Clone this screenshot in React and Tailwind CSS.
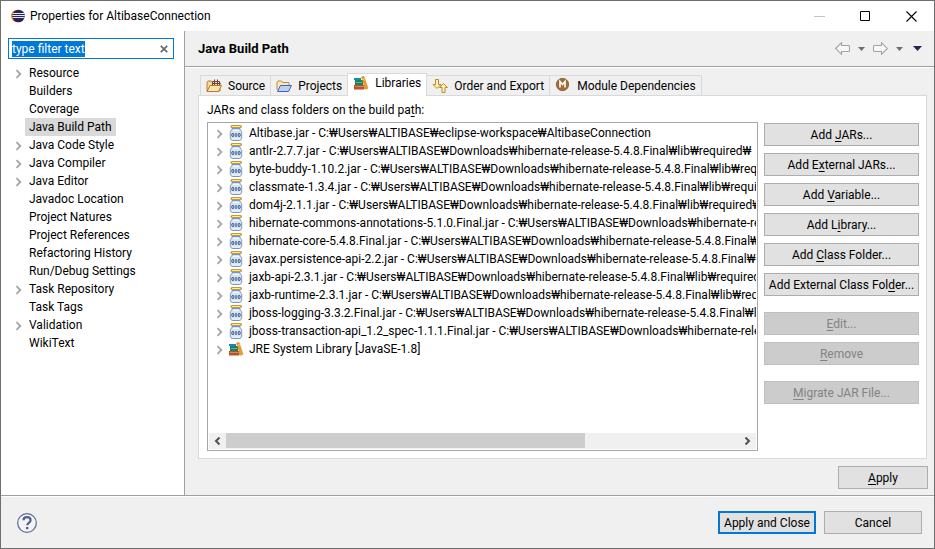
import { useEffect, useRef } from "react";

const LIB = "C:₩Users₩ALTIBASE₩Downloads₩hibernate-release-5.4.8.Final₩lib₩required₩";

const PAGES = [
  ["Resource", true],
  ["Builders", false],
  ["Coverage", false],
  ["Java Build Path", false],
  ["Java Code Style", true],
  ["Java Compiler", true],
  ["Java Editor", true],
  ["Javadoc Location", false],
  ["Project Natures", false],
  ["Project References", false],
  ["Refactoring History", false],
  ["Run/Debug Settings", false],
  ["Task Repository", true],
  ["Task Tags", false],
  ["Validation", true],
  ["WikiText", false],
];

const JARS = [
  "Altibase.jar - C:₩Users₩ALTIBASE₩eclipse-workspace₩AltibaseConnection",
  "antlr-2.7.7.jar - " + LIB,
  "byte-buddy-1.10.2.jar - " + LIB,
  "classmate-1.3.4.jar - " + LIB,
  "dom4j-2.1.1.jar - " + LIB,
  "hibernate-commons-annotations-5.1.0.Final.jar - " + LIB,
  "hibernate-core-5.4.8.Final.jar - " + LIB,
  "javax.persistence-api-2.2.jar - " + LIB,
  "jaxb-api-2.3.1.jar - " + LIB,
  "jaxb-runtime-2.3.1.jar - " + LIB,
  "jboss-logging-3.3.2.Final.jar - " + LIB,
  "jboss-transaction-api_1.2_spec-1.1.1.Final.jar - " + LIB,
];

function EclipseIcon() {
  return (
    <svg className="size-4 shrink-0" viewBox="0 0 16 16" aria-hidden="true">
      <circle cx="7.200" cy="8" r="6.200" fill="#f7941e" />
      <circle cx="8.500" cy="8" r="6.300" fill="#2c2255" />
      <path d="M2.600 5.500h12M2.200 7.500h12.600M2.600 9.500h12" stroke="#e8e6f2" strokeWidth="1" />
    </svg>
  );
}

function Chevron({ visible = true }) {
  return (
    <svg className="h-[18px] w-2 shrink-0" viewBox="0 0 8 18" aria-hidden="true">
      {visible && <path d="M1.500 6.200 5.300 10 1.500 13.800" fill="none" stroke="#a6a6a6" strokeWidth="1.800" />}
    </svg>
  );
}

function JarIcon() {
  return (
    <svg className="size-4 shrink-0" viewBox="0 0 16 16" aria-hidden="true">
      <path d="M4 3.500h8v1.500c1.200.6 1.700 1.400 1.700 2.500v5c0 1.700-.9 3-2.600 3H4.900c-1.700 0-2.600-1.300-2.600-3v-5c0-1.100.5-1.900 1.700-2.500z" fill="#d5e3f3" stroke="#7896c0" />
      <path d="M5 5.500h6M4 14h8" stroke="#f4f9ff" />
      <path d="M4 1.500h8.500" stroke="#c79a2e" strokeWidth="3" strokeLinecap="round" />
      <path d="M4.500 1.500h7.500" stroke="#f9e9ae" strokeLinecap="round" />
      <rect x="3.900" y="8.500" width="1.900" height="3" rx=".8" fill="none" stroke="#1f3a6b" strokeWidth=".9" />
      <path d="M8 8v4" stroke="#1f3a6b" />
      <rect x="10.200" y="8.500" width="1.900" height="3" rx=".8" fill="none" stroke="#1f3a6b" strokeWidth=".9" />
    </svg>
  );
}

function BooksIcon() {
  return (
    <svg className="size-4 shrink-0" viewBox="0 0 16 16" aria-hidden="true">
      <path d="M1 3h7v2H1z" fill="#1b87b5" />
      <path d="M2 5h8v5.500H2z" fill="#178264" />
      <path d="M3 7.500h6" stroke="#5fb592" />
      <path d="M1 10h10.500v4.500H1z" fill="#b5522a" />
      <path d="M2 11.500h9" stroke="#d98a52" />
      <path d="M8.500 2 11 1.300 15 13.300 12.500 14.300z" fill="#e9a02c" stroke="#d08a20" strokeWidth=".6" />
      <path d="M9.300 4.500l2.400-.8" stroke="#fbe0a0" strokeWidth=".8" />
    </svg>
  );
}

function SourceIcon() {
  return (
    <svg className="size-4 shrink-0" viewBox="0 0 16 16" aria-hidden="true">
      <path d="M1 13V4.500L2 3h3.500l1 1.500H14V13z" fill="#f6d999" stroke="#b87a2b" />
      <path d="M6.500 3.500h7v4h-7zM6.500 5.500h8M8.500 1.500v6M11.500 1.500v6" fill="#f1dfce" stroke="#6f4034" />
      <path d="M1 13.500 4 7.500h11.500L12.500 13.500z" fill="#fbe3ae" stroke="#b87a2b" />
    </svg>
  );
}

function ProjectsIcon() {
  return (
    <svg className="size-4 shrink-0" viewBox="0 0 16 16" aria-hidden="true">
      <path d="M1 12V4.500L2 3h3.500l1 1.500H13V8" fill="#fbe7b5" stroke="#c08a3a" />
      <path d="M1.500 13.500 4.500 7.500h11l-3 6z" fill="#b9d2f5" stroke="#3f63b4" />
    </svg>
  );
}

function OrderIcon() {
  return (
    <svg className="size-4 shrink-0" viewBox="0 0 16 16" aria-hidden="true">
      <path d="M3.500 1.500h3v5H9L5 10.500 1 6.500h2.500z" fill="#fdf0bb" stroke="#c08a22" />
      <path d="M10 14.500h3v-5h2.500l-4-4-4 4H10z" fill="#fdf0bb" stroke="#c08a22" />
    </svg>
  );
}

function ModuleIcon() {
  return (
    <svg className="size-4 shrink-0" viewBox="0 0 16 16" aria-hidden="true">
      <circle cx="7.500" cy="6.500" r="6.200" fill="#a26a35" stroke="#7d5026" strokeWidth=".7" />
      <path d="M5 9.500v-6l2.500 3 2.500-3v6" fill="none" stroke="#fff" strokeWidth="1.600" />
    </svg>
  );
}

function NavArrow({ flip }) {
  return (
    <svg className={flip ? "h-[13px] w-[15px] rotate-180" : "h-[13px] w-[15px]"} viewBox="0 0 15 13" aria-hidden="true">
      <path d="M.7 6.500 6.500.7v2.800h7q1 0 1 1v4q0 1-1 1h-7v2.800z" fill="#f8f8f8" stroke="#a3a3a3" strokeWidth="1.100" />
    </svg>
  );
}

function Triangle({ dark }) {
  return dark ? (
    <svg className="h-[5px] w-[9px]" viewBox="0 0 9 5" aria-hidden="true">
      <path d="M0 0h9L4.500 5z" fill="#2f1f55" />
    </svg>
  ) : (
    <svg className="h-1 w-[7px]" viewBox="0 0 7 4" aria-hidden="true">
      <path d="M0 0h7L3.500 4z" fill="#6f6f6f" />
    </svg>
  );
}

function ScrollArrow({ flip }) {
  return (
    <button type="button" aria-label={flip ? "Scroll right" : "Scroll left"} className="flex w-[17px] shrink-0 items-center justify-center">
      <svg className={flip ? "h-2 w-[7px] rotate-180" : "h-2 w-[7px]"} viewBox="0 0 7 8" aria-hidden="true">
        <path d="M5.500.5 2 4l3.500 3.500" fill="none" stroke="#505050" strokeWidth="2" />
      </svg>
    </button>
  );
}

/* The letter after "&" in a label is its keyboard mnemonic. */
function Mnemonic({ text }) {
  const at = text.indexOf("&");
  if (at < 0) return text;
  return (
    <span>
      {text.slice(0, at)}
      <u className="underline-offset-2">{text[at + 1]}</u>
      {text.slice(at + 2)}
    </span>
  );
}

function PushButton({ label, className = "", disabled = false }) {
  return (
    <button
      type="button"
      disabled={disabled}
      className={
        "h-[23px] shrink-0 border border-[#adadad] bg-[#e1e1e1] text-center leading-5 whitespace-nowrap disabled:border-[#bfbfbf] disabled:bg-[#cccccc] disabled:text-[#838383] " +
        className
      }
    >
      <Mnemonic text={label} />
    </button>
  );
}

function Tab({ icon, label, selected = false }) {
  return (
    <button
      type="button"
      role="tab"
      aria-selected={selected}
      className={
        selected
          ? "-mb-px flex h-[23px] items-center gap-1.5 border border-b-0 border-[#d9d9d9] bg-white px-[5px] pb-1"
          : "flex h-5 items-center gap-1.5 border-t border-l border-[#d9d9d9] bg-[#f0f0f0] px-[5px] last:border-r [[aria-selected=true]+&]:border-l-0"
      }
    >
      {icon}
      {label}
    </button>
  );
}

function LibraryRow({ icon, text }) {
  return (
    <li className="flex h-[18px] items-center pl-[7px]">
      <Chevron />
      <span className="ml-1 flex">{icon}</span>
      <span className="ml-[5px] whitespace-nowrap">{text}</span>
    </li>
  );
}

export default function App() {
  const filter = useRef(null);
  useEffect(() => {
    filter.current.focus();
    filter.current.select();
  }, []);

  return (
    <div className="flex h-screen flex-col border border-[#6e6e6e] bg-[#f0f0f0] font-[Roboto,'Noto_Sans_CJK_KR',sans-serif] text-[12px] leading-[18px] text-black">
      <header className="flex h-[30px] shrink-0 items-center bg-white pl-[9px]">
        <EclipseIcon />
        <h1 className="ml-1 grow">Properties for AltibaseConnection</h1>
        <button type="button" aria-label="Minimize" className="flex h-full w-[46px] items-center justify-center">
          <svg className="size-[11px]" viewBox="0 0 11 11" aria-hidden="true"><path d="M0 5.500h11" stroke="#c4c4c4" /></svg>
        </button>
        <button type="button" aria-label="Maximize" className="flex h-full w-[46px] items-center justify-center">
          <svg className="size-[11px]" viewBox="0 0 11 11" aria-hidden="true"><path d="M.5.5h9v9h-9z" fill="none" stroke="#000" /></svg>
        </button>
        <button type="button" aria-label="Close" className="flex h-full w-[46px] items-center justify-center">
          <svg className="size-[11px]" viewBox="0 0 11 11" aria-hidden="true"><path d="M.5.5l10 10M10.500.5l-10 10" stroke="#000" strokeWidth="1.100" /></svg>
        </button>
      </header>

      <div className="flex min-h-0 grow">
        <nav className="w-[184px] shrink-0 border-r border-[#a0a0a0] bg-white pt-[7px] pr-2.5 pl-[7px]">
          <div className="flex h-[21px] items-center border border-[#0078d7] pr-[5px] pl-[3px]">
            <input
              ref={filter}
              type="text"
              aria-label="Filter"
              defaultValue="type filter text"
              className="h-4 min-w-0 grow outline-none selection:bg-[#0078d7] selection:text-white"
            />
            <button type="button" aria-label="Clear filter">
              <svg className="size-2" viewBox="0 0 8 8" aria-hidden="true"><path d="M.8.8l6.400 6.400M7.200.8.8 7.200" stroke="#6b6b6b" strokeWidth="1.800" /></svg>
            </button>
          </div>
          <ul className="mt-[5px] pl-[7px]">
            {PAGES.map(([name, expandable]) => (
              <li key={name} className="flex h-[18px] items-center">
                <Chevron visible={expandable} />
                <a href="#page" className={name === "Java Build Path" ? "ml-0.5 bg-[#d9d9d9] px-1" : "ml-0.5 px-1"}>
                  {name}
                </a>
              </li>
            ))}
          </ul>
        </nav>

        <main className="flex min-w-0 grow flex-col">
          <div className="flex h-9 shrink-0 items-center border-b border-[#a0a0a0] pr-3 pl-[13px]">
            <h2 className="grow text-[13px] font-bold">Java Build Path</h2>
            <div className="flex items-center gap-2">
              <button type="button" aria-label="Back"><NavArrow /></button>
              <button type="button" aria-label="Back history"><Triangle /></button>
              <button type="button" aria-label="Forward"><NavArrow flip /></button>
              <button type="button" aria-label="Forward history"><Triangle /></button>
              <button type="button" aria-label="View menu" className="ml-0.5"><Triangle dark /></button>
            </div>
          </div>

          <div className="flex min-h-0 grow flex-col border-t border-white pt-[5px] pb-1.5 pl-[13px]">
            <div role="tablist" className="z-10 flex h-[22px] shrink-0 items-end pl-0.5">
              <Tab icon={<SourceIcon />} label="Source" />
              <Tab icon={<ProjectsIcon />} label="Projects" />
              <Tab icon={<BooksIcon />} label="Libraries" selected />
              <Tab icon={<OrderIcon />} label="Order and Export" />
              <Tab icon={<ModuleIcon />} label="Module Dependencies" />
            </div>

            <section className="mr-[7px] flex min-h-0 grow flex-col border border-[#d9d9d9] bg-white pt-[5px] pr-[7px] pb-[7px] pl-2">
              <h3 id="jars">
                <Mnemonic text="JARs and class folders on the build pa&th:" />
              </h3>
              <div className="mt-[3px] flex min-h-0 grow gap-1.5">
                <div className="flex min-w-0 grow flex-col border border-[#a5a7af] p-px">
                  <ul aria-labelledby="jars" className="min-h-0 grow overflow-hidden">
                    {JARS.map((jar) => (
                      <LibraryRow key={jar} icon={<JarIcon />} text={jar} />
                    ))}
                    <LibraryRow icon={<BooksIcon />} text="JRE System Library [JavaSE-1.8]" />
                  </ul>
                  <div className="flex h-4 shrink-0 bg-[#f0f0f0]">
                    <ScrollArrow />
                    <div className="grow">
                      <div className="h-[15px] w-[70%] bg-[#cdcdcd]" />
                    </div>
                    <ScrollArrow flip />
                  </div>
                </div>
                <div className="flex w-[155px] shrink-0 flex-col gap-[7px] pt-px">
                  <PushButton label="Add &JARs..." />
                  <PushButton label="Add E&xternal JARs..." />
                  <PushButton label="Add &Variable..." />
                  <PushButton label="Add L&ibrary..." />
                  <PushButton label="Add &Class Folder..." />
                  <PushButton label="Add External Class Fol&der..." />
                  <PushButton label="&Edit..." className="mt-[9px]" disabled />
                  <PushButton label="&Remove" disabled />
                  <PushButton label="&Migrate JAR File..." className="mt-[9px]" disabled />
                </div>
              </div>
            </section>

            <PushButton label="&Apply" className="mt-[7px] mr-1.5 w-[90px] self-end" />
          </div>
        </main>
      </div>

      <footer className="shrink-0 border-t border-[#a0a0a0]">
        <div className="flex h-[52px] items-center gap-2 border-t border-white pr-3 pl-4">
          <button type="button" aria-label="Help" className="mr-auto">
            <svg className="size-5" viewBox="0 0 20 20" aria-hidden="true">
              <circle cx="10" cy="10" r="9.300" fill="#f4f4f6" stroke="#5a6b8f" strokeWidth="1.200" />
              <path d="M6.500 7.300C6.500 5.200 8 4.200 10 4.200s3.600 1.100 3.600 3c0 2.400-3.300 2.300-3.300 5" fill="none" stroke="#51628c" strokeWidth="2.200" />
              <path d="M9 14h2.400v2.200H9z" fill="#51628c" />
            </svg>
          </button>
          <PushButton label="Apply and Close" className="w-[98px] !border-2 !border-[#0078d7] !leading-4" />
          <PushButton label="Cancel" className="w-[98px]" />
        </div>
      </footer>
    </div>
  );
}
